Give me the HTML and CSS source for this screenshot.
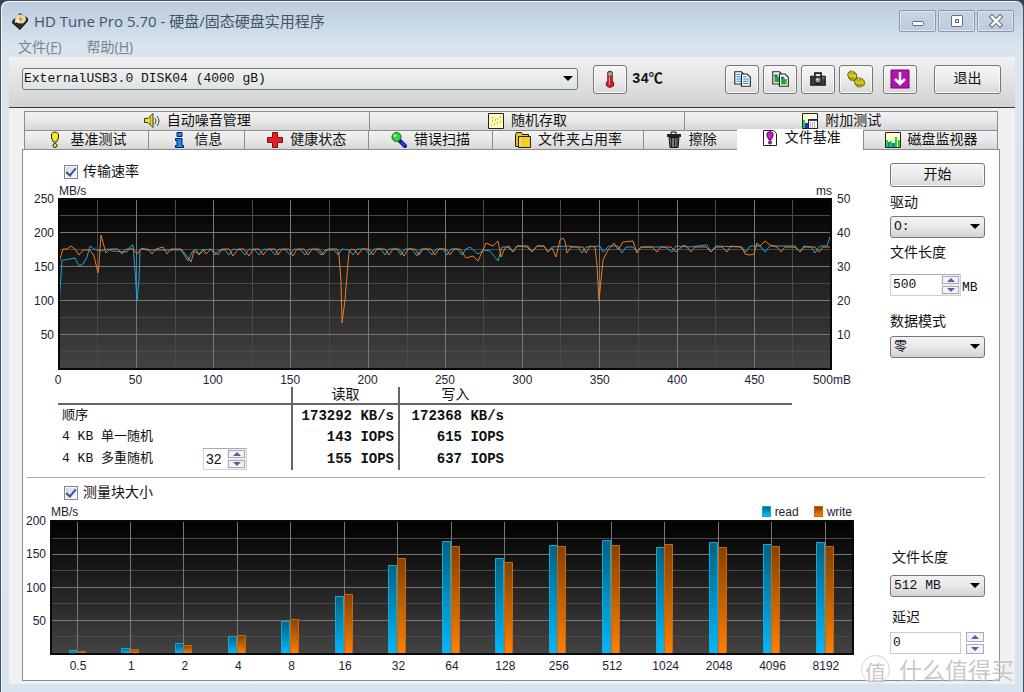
FILE: index.html
```
<!DOCTYPE html>
<html lang="zh-CN">
<head>
<meta charset="utf-8">
<title>HD Tune Pro 5.70</title>
<link rel="stylesheet" href="styles.css">
</head>
<body>
<div class="window">
  <header class="titlebar">
    <svg class="app-icon" viewBox="0 0 18 18"><path d="M1 9 9 1l8 5-8 10z" fill="#2b2622"/><path d="m1 9 8 7v2L1 11zM9 16l8-10v3L9 18z" fill="#111"/><ellipse cx="9.500" cy="7" rx="5.500" ry="4.500" fill="#f0d3a4"/><circle cx="9.500" cy="7" r="1.500" fill="#b98a50"/><path d="m4 10 4-2" stroke="#fff" stroke-width="1.500"/></svg>
    <h1>HD Tune Pro 5.70 - 硬盘/固态硬盘实用程序</h1>
    <div class="caption">
      <button aria-label="最小化"><svg viewBox="0 0 14 14"><rect x="1.500" y="7.500" width="11" height="4" rx="1" fill="#fff" stroke="#626a75"/></svg></button>
      <button aria-label="最大化"><svg viewBox="0 0 14 14"><rect x="1.500" y="1.500" width="11" height="11" rx="1" fill="#fff" stroke="#626a75"/><rect x="5.500" y="5.500" width="3" height="3" fill="#dbe5ef" stroke="#626a75"/></svg></button>
      <button aria-label="关闭"><svg viewBox="0 0 14 14"><path d="m3 3 8 8m0-8-8 8" stroke="#626a75" stroke-width="4.500" stroke-linecap="square"/><path d="m3 3 8 8m0-8-8 8" stroke="#fff" stroke-width="2.500" stroke-linecap="square"/></svg></button>
    </div>
  </header>
  <nav class="menubar"><button>文件(<u>F</u>)</button><button>帮助(<u>H</u>)</button></nav>

  <main class="client">
    <div class="toolbar">
      <label class="combo drive"><select aria-label="磁盘"><option>ExternalUSB3.0 DISK04 (4000 gB)</option></select></label>
      <button class="tool" aria-label="温度"><svg viewBox="0 0 18 18"><path d="M7 3q2-2 4 0v8q2 2 1 4-3 3-6 0-1-2 1-4z" fill="#e11a22" stroke="#7a2020"/><path d="M7.500 3h3v3h-3z" fill="#45e0c0"/><path d="M8.500 7v7" stroke="#ff9a9a"/></svg></button>
      <output class="temp">34℃</output>
      <div class="tools">
        <button class="tool" aria-label="复制文本"><svg viewBox="0 0 18 18"><path d="M2.500 2.500h6l2 2v9h-8z" fill="#fff" stroke="#222"/><path d="M8.500 4.500h5l3 3v8h-8z" fill="#fff" stroke="#222"/><path d="M4 5h3M4 7h4M4 9h4M4 11h4M10 7h3M10 9h5M10 11h5M10 13h5" stroke="#1683d8"/></svg></button>
        <button class="tool" aria-label="复制图像"><svg viewBox="0 0 18 18"><path d="M2.500 2.500h6l2 2v9h-8z" fill="#fff" stroke="#222"/><path d="M4 5h3v2h1v5H4z" fill="#25a52a"/><path d="M8.500 4.500h5l3 3v8h-8z" fill="#fff" stroke="#222"/><path d="M10 7h3v2h2v5h-5z" fill="#25a52a"/><path d="M10 7h2v2h-2zM4 5h2v2H4z" fill="#2368c9"/></svg></button>
        <button class="tool" aria-label="截图"><svg viewBox="0 0 18 18"><path d="M2.500 6.500H6v-3h6v3h3.500v8h-13z" fill="#3a423e" stroke="#111"/><path d="M7 4.500h4v2H7z" fill="#dce7df"/><circle cx="9" cy="10" r="3" fill="#7b8c82" stroke="#111"/><circle cx="8.500" cy="9.500" r="1" fill="#e6f1ea"/><path d="M13 8h2" stroke="#35e050"/></svg></button>
        <button class="tool" aria-label="选项"><svg viewBox="0 0 18 18"><g fill="#d8ce13" stroke="#716c12"><path d="m1.500 5 1-2 2-1 3 1 2 2v3l-2 2-3 0-2-2z"/><path d="m7.500 11 1-2 3-1 3 1 2 2v3l-3 2-3 0-2-2z"/></g><path d="M5.500 1.500v4M11.500 7.500v4" stroke="#716c12" stroke-width="2.500"/><path d="M5.500 1.500v4M11.500 7.500v4" stroke="#f5efaa"/><path d="M3 7.500q2 2 4 0m2 6q3 2 5 0" fill="none" stroke="#8a8418"/></svg></button>
        <button class="tool save" aria-label="保存"><svg viewBox="0 0 20 20"><path d="M1 1h18v18H1z" fill="#b313b0" stroke="#760477"/><path d="M10 3v12m-5-5 5 5 5-5" fill="none" stroke="#fff" stroke-width="2.500"/></svg></button>
        <button class="exit">退出</button>
      </div>
    </div>

    <div class="tabs">
      <div class="tabrow upper">
        <button><svg viewBox="0 0 18 18"><path d="M1.500 6.500H5l5-5v14l-5-5H1.500z" fill="#f3e81c" stroke="#333"/><path d="M7.500 4v9" stroke="#8d8612"/><path d="M12 6q2 3 0 6m2-8q4 5 0 10" fill="none" stroke="#444"/></svg>自动噪音管理</button>
        <button><svg viewBox="0 0 18 18"><path d="M1.500 1.500h15v15h-15z" fill="#ffffb4" stroke="#222"/><path d="M4 13h1m0-4h1m1 3h1m0-4h1m1 3h1m-1-4h1m2-2h1m-1 5h1m-9-4h1" stroke="#886a32"/></svg>随机存取</button>
        <button><svg viewBox="0 0 18 18"><path d="M1.500 1.500h15v15h-15z" fill="#fffbd7" stroke="#222"/><path d="M2 16V8h2v8z" fill="#16dd1c"/><path d="M4 16v-5h3v5z" fill="#2229ee"/><path d="M7.500 7.500h9v9h-9z" fill="#fff" stroke="#223"/><path d="M8 8.500h8" stroke="#2c45bf"/><path d="M9 11h6M9 13h6M9 15h6" stroke="#a55" stroke-dasharray="1 1"/></svg>附加测试</button>
      </div>
      <div class="tabrow lower">
        <button><svg viewBox="0 0 18 18"><path d="M5.500 3q3.500-4 7 0v4l-2 4h-3l-2-4z" fill="#f4ec19" stroke="#222"/><circle cx="9" cy="14.500" r="2" fill="#f4ec19" stroke="#222"/></svg>基准测试</button>
        <button><svg viewBox="0 0 18 18"><path d="M7 1.500h5v4H7zM5.500 7.500H12v7h1.500v2h-8v-2H7v-5H5.500z" fill="#168cf5" stroke="#08175c"/></svg>信息</button>
        <button><svg viewBox="0 0 18 18"><path d="M6.500 1.500h5v5h5v5h-5v5h-5v-5h-5v-5h5z" fill="#e91d1d" stroke="#7d1010"/></svg>健康状态</button>
        <button><svg viewBox="0 0 18 18"><path d="m10 10 5 5" stroke="#10107c" stroke-width="4" stroke-linecap="round"/><path d="m11 11 4 4" stroke="#2b45ff" stroke-width="2"/><circle cx="6.500" cy="6" r="4.500" fill="#2ed83a" stroke="#1b5a22"/><circle cx="5" cy="4.500" r="1.500" fill="#a8f6a6"/></svg>错误扫描</button>
        <button><svg viewBox="0 0 18 18"><path d="M1.500 3.500l1-2h5l1 2h6v12h-13z" fill="#e4c419" stroke="#222"/><path d="M4.500 5.500h12v11h-12z" fill="#f3cf29" stroke="#222"/><path d="M6 7v8" stroke="#fff49c"/></svg>文件夹占用率</button>
        <button><svg viewBox="0 0 18 18"><path d="M6 3V1h5v2" fill="none" stroke="#111"/><path d="M2 3h14v3H2z" fill="#222"/><path d="M4 6.500h10l-1 10H5z" fill="#777" stroke="#111"/><path d="M6.500 7v9m3-9v9m2.500-9v9" stroke="#222"/></svg>擦除</button>
        <button class="active"><svg viewBox="0 0 18 18"><path d="M2.500 1.500h10l3 3v12h-13z" fill="#fff" stroke="#222"/><path d="M6 4q3-3 6 0v3l-2 4H8L6 7z" fill="#cf16ca" stroke="#49104a"/><circle cx="9" cy="13.500" r="1.500" fill="#cf16ca" stroke="#49104a"/></svg>文件基准</button>
        <button><svg viewBox="0 0 18 18"><path d="M1.500 1.500h15v15h-15z" fill="#ffffd1" stroke="#222"/><path d="M2 16V9h2v7zm4 0v-6h2v6zm5 0V6h2v10zm3 0V9h2v7z" fill="#16dd1c"/><path d="M4 16v-5h2v5zm4 0v-4h3v4z" fill="#187bd2"/></svg>磁盘监视器</button>
      </div>
    </div>

    <div class="panel">
      <section class="section transfer">
        <div class="content">
          <label class="check"><input type="checkbox" checked>传输速率</label>
          <div class="chart line-chart">
            <span class="unit">MB/s</span><span class="unit right">ms</span>
            <div class="yaxis"><span>250</span><span>200</span><span>150</span><span>100</span><span>50</span><span></span></div>
            <svg class="plot" viewBox="58 198 774 172" preserveAspectRatio="none" role="img" aria-label="传输速率曲线">
              <defs><linearGradient id="bg" x2="0" y2="1"><stop stop-color="#000"/><stop offset="1" stop-color="#444"/></linearGradient></defs>
              <path d="M58 198h774v172H58z" fill="url(#bg)"/>
              <path class="grid minor" d="M58 215.500h774M58 249.500h774M58 283.500h774M58 317.500h774M58 351.500h774M97.500 198v172M175.500 198v172M252.500 198v172M329.500 198v172M407.500 198v172M483.500 198v172M560.500 198v172M638.500 198v172M715.500 198v172M792.500 198v172"/>
              <path class="grid" d="M58 199.500h774M58 232.500h774M58 266.500h774M58 300.500h774M58 334.500h774M136.500 198v172M213.500 198v172M290.500 198v172M368.500 198v172M445.500 198v172M522.500 198v172M599.500 198v172M677.500 198v172M754.500 198v172"/>
              <polyline class="trace read" points="59,310 60,290 62,260 65,260 75,258 79,266 83,264 87,257 90,246 94,249 100,251 108,249 112,251 127,252 130,247 133,245 135,270 137,301 139,280 140,250 142,248 146,250 160,250 181,250 188,261 192,252 196,249 199,255 204,250 211,249 215,255 219,250 225,250 229,255 233,249 241,250 245,255 249,249 255,250 259,255 264,249 271,250 275,255 279,249 286,250 290,255 294,249 301,250 305,255 309,249 317,250 321,255 325,250 334,250 338,255 342,249 349,250 353,255 357,249 365,249 370,255 374,249 381,249 385,255 389,249 397,249 401,255 405,249 412,249 417,256 421,249 427,249 432,255 436,249 443,249 447,255 451,249 457,249 462,255 466,249 470,247 478,254 484,250 490,251 498,261 502,247 508,247 513,252 517,246 527,247 532,252 537,246 544,246 548,252 552,247 567,246 578,247 582,253 586,247 600,246 603,252 609,246 618,246 622,253 626,247 633,247 637,252 641,247 665,247 672,252 676,246 689,247 707,245 711,252 716,246 740,247 746,252 750,246 760,246 765,252 770,246 795,246 800,252 804,246 811,247 815,253 820,246 827,246 831,234"/>
              <polyline class="trace write" points="59,266 60,259 63,249 67,249 71,246 75,249 79,255 83,250 90,250 94,256 98,273 99,263 101,235 104,246 106,253 110,249 118,249 122,254 126,249 133,249 137,254 141,249 148,249 152,254 156,249 163,247 167,254 171,249 181,249 186,255 191,262 194,251 199,254 203,249 206,254 211,249 218,255 222,249 229,249 233,256 238,249 244,249 249,256 253,249 259,249 263,255 268,249 275,249 278,255 282,249 289,249 293,256 297,249 304,249 308,255 312,249 319,249 323,255 328,249 337,249 339,255 341,282 342,323 345,300 347,275 349,252 351,249 355,250 358,255 362,249 369,249 373,255 377,249 385,249 389,255 393,249 399,249 404,256 408,249 415,249 419,255 423,249 431,249 435,255 439,249 446,249 450,255 454,249 460,249 466,258 473,256 478,261 483,250 486,243 493,246 498,241 501,257 505,248 509,246 513,252 517,246 528,246 532,252 537,246 544,246 548,252 552,248 556,257 560,240 563,238 565,241 567,253 571,247 583,247 586,253 590,246 595,247 597,265 599,301 601,280 603,260 608,250 614,243 618,250 623,242 633,241 637,253 641,247 652,247 657,252 661,247 671,247 676,252 684,245 687,247 691,252 695,247 706,247 711,252 716,247 722,247 727,252 731,246 742,247 745,254 750,255 754,254 757,243 760,246 765,241 770,245 777,247 781,252 785,247 795,247 800,252 804,247 815,247 819,252 823,247 831,247"/>
              <path class="frame" d="M59 199h772v170H59z"/>
            </svg>
            <div class="yaxis right"><span>50</span><span>40</span><span>30</span><span>20</span><span>10</span><span></span></div>
            <div class="xaxis"><span>0</span><span>50</span><span>100</span><span>150</span><span>200</span><span>250</span><span>300</span><span>350</span><span>400</span><span>450</span><span>500mB</span></div>
          </div>
          <table class="results">
            <thead><tr><th class="name"></th><th class="val">读取</th><th class="val">写入</th><th></th></tr></thead>
            <tbody>
              <tr><th class="name" scope="row">顺序</th><td>173292 KB/s</td><td>172368 KB/s</td><td></td></tr>
              <tr><th class="name" scope="row">4 KB 单一随机</th><td>143 IOPS</td><td>615 IOPS</td><td></td></tr>
              <tr><th class="name" scope="row"><div class="queue">4 KB 多重随机<span class="spin narrow"><input type="text" value="32" aria-label="队列深度"><span class="arrows"><button aria-label="增加"></button><button aria-label="减少"></button></span></span></div></th><td>155 IOPS</td><td>637 IOPS</td><td></td></tr>
            </tbody>
          </table>
        </div>
        <aside class="side">
          <button class="start">开始</button>
          <label for="drv">驱动</label>
          <span class="combo"><select id="drv"><option>O:</option></select></span>
          <label for="len">文件长度</label>
          <div class="length"><span class="spin"><input id="len" type="text" value="500"><span class="arrows"><button aria-label="增加"></button><button aria-label="减少"></button></span></span><span>MB</span></div>
          <label for="mode">数据模式</label>
          <span class="combo"><select id="mode"><option>零</option></select></span>
        </aside>
      </section>

      <section class="section blocks">
        <div class="content">
          <label class="check"><input type="checkbox" checked>测量块大小</label>
          <div class="chart bar-chart">
            <span class="unit">MB/s</span>
            <div class="legend"><span><i class="swatch read"></i>read</span><span><i class="swatch write"></i>write</span></div>
            <div class="yaxis"><span>200</span><span>150</span><span>100</span><span>50</span><span></span></div>
            <svg class="plot" viewBox="50 520 804 135" preserveAspectRatio="none" role="img" aria-label="块大小测试">
              <defs>
                <linearGradient id="rd" x2="0" y2="1"><stop stop-color="#006384"/><stop offset="1" stop-color="#00b9ff"/></linearGradient>
                <linearGradient id="wr" x2="0" y2="1"><stop stop-color="#854300"/><stop offset="1" stop-color="#ff8000"/></linearGradient>
              </defs>
              <path d="M50 520h804v135H50z" fill="url(#bg)"/>
              <path class="grid minor" d="M50 538.500h804M50 570.500h804M50 603.500h804M50 636.500h804"/>
              <path class="grid" d="M50 521.500h804M50 554.500h804M50 587.500h804M50 620.500h804M77.500 520v135M130.500 520v135M183.500 520v135M237.500 520v135M290.500 520v135M344.500 520v135M397.500 520v135M451.500 520v135M504.500 520v135M557.500 520v135M611.500 520v135M664.500 520v135M718.500 520v135M771.500 520v135M825.500 520v135"/>
              <g fill="url(#rd)" stroke="#17a6d5">
                <path d="M69.500 650.500h8v3h-8z"/><path d="M121.500 648.500h8v5h-8z"/><path d="M175.500 643.500h8v10h-8z"/><path d="M228.500 636.500h8v17h-8z"/><path d="M281.500 621.500h8v32h-8z"/><path d="M335.500 596.500h8v57h-8z"/><path d="M388.500 565.500h8v88h-8z"/><path d="M442.500 541.500h8v112h-8z"/><path d="M495.500 558.500h8v95h-8z"/><path d="M549.500 545.500h8v108h-8z"/><path d="M602.500 540.500h8v113h-8z"/><path d="M656.500 547.500h8v106h-8z"/><path d="M709.500 542.500h8v111h-8z"/><path d="M763.500 544.500h8v109h-8z"/><path d="M816.500 542.500h8v111h-8z"/>
              </g>
              <g fill="url(#wr)" stroke="#cf640a">
                <path d="M77.500 651.500h8v2h-8z"/><path d="M130.500 649.500h8v4h-8z"/><path d="M183.500 645.500h8v8h-8z"/><path d="M237.500 635.500h8v18h-8z"/><path d="M290.500 619.500h8v34h-8z"/><path d="M344.500 594.500h8v59h-8z"/><path d="M397.500 558.500h8v95h-8z"/><path d="M451.500 546.500h8v107h-8z"/><path d="M504.500 562.500h8v91h-8z"/><path d="M557.500 546.500h8v107h-8z"/><path d="M611.500 545.500h8v108h-8z"/><path d="M664.500 544.500h8v109h-8z"/><path d="M718.500 547.500h8v106h-8z"/><path d="M771.500 546.500h8v107h-8z"/><path d="M825.500 546.500h8v107h-8z"/>
              </g>
              <path class="frame" d="M51 521h802v133H51z"/>
            </svg>
            <div class="xaxis"><span>0.5</span><span>1</span><span>2</span><span>4</span><span>8</span><span>16</span><span>32</span><span>64</span><span>128</span><span>256</span><span>512</span><span>1024</span><span>2048</span><span>4096</span><span>8192</span></div>
          </div>
        </div>
        <aside class="side">
          <label for="len2">文件长度</label>
          <span class="combo"><select id="len2"><option>512 MB</option></select></span>
          <label for="delay">延迟</label>
          <span class="spin apart"><input id="delay" type="text" value="0"><span class="arrows"><button aria-label="增加"></button><button aria-label="减少"></button></span></span>
        </aside>
      </section>
    </div>
  </main>
  <div class="watermark"><span class="seal">值</span><span>什么值得买</span></div>
</div>
</body>
</html>
```
FILE: styles.css
```
* { box-sizing: border-box; }
body { margin: 0; background: #3c4046; color: #111; font: 14px/20px "Liberation Mono", "Noto Sans CJK SC", monospace; }
button, select, input { font: inherit; color: inherit; margin: 0; }
button { padding: 0; }

.window { position: relative; display: flex; flex-direction: column; min-height: 100vh; padding: 0 8px 8px; border: 1px solid #4a5058; border-radius: 8px 8px 0 0; background: linear-gradient(#bccbdc 0, #c9d8e8 24px, #dae4ef 46px, #d8e3f1 100%); box-shadow: inset 1px 1px #f0f6fc; }

.titlebar { display: flex; align-items: center; gap: 5px; height: 40px; padding-left: 2px; }
.app-icon { width: 18px; height: 18px; }
.titlebar h1 { flex: 1; margin: 0; font: 15px/20px "Open Sans", "Noto Sans CJK SC", sans-serif; color: #45525f; }
.caption { display: flex; gap: 2px; align-self: flex-start; padding: 9px 1px 0 0; }
.caption button { display: grid; place-items: center; width: 37px; height: 22px; border: 1px solid #8797ab; border-radius: 2px; background: linear-gradient(#c6d4e3, #bccbdc); box-shadow: inset 0 0 0 1px #dce7f2; }
.caption svg { width: 14px; height: 14px; }

.menubar { display: flex; gap: 25px; height: 16px; padding-left: 9px; }
.menubar button { height: 12px; border: 0; background: none; font: 14px/12px "Open Sans", "Noto Sans CJK SC", sans-serif; color: #7b8289; }

.client { flex: 1; background: #f0f0f0; padding-bottom: 3px; }
.toolbar { display: flex; align-items: center; height: 51px; padding: 0 14px 6px 13px; border-bottom: 1px solid #333; background: linear-gradient(#f1f1f1, #d2d2d2); }
.combo { position: relative; display: block; height: 22px; }
.combo select { appearance: none; display: block; width: 100%; height: 100%; padding: 0 20px 0 3px; border: 1px solid #777; border-radius: 3px; background: linear-gradient(#f2f2f2, #e8e8e8 50%, #d2d2d2); font-size: 13px; line-height: 20px; }
.combo::after { content: ""; position: absolute; right: 5px; top: 8px; border: 5px solid transparent; border-top-color: #000; border-bottom: 0; }
.drive { width: 556px; }
.drive select { padding-left: 1px; background: linear-gradient(#f0f2f2, #dde3e3); border-color: #707a80; }
.tool, .exit, .start { border: 1px solid #777; border-radius: 3px; background: linear-gradient(#f5f5f5, #ececec 50%, #d8d8d8); box-shadow: inset 0 0 0 1px #f8f8f8; }
.tool { display: grid; place-items: center; width: 34px; height: 29px; }
.tool svg { width: 20px; height: 20px; }
.drive + .tool { margin-left: 15px; }
.temp { margin-left: 5px; font-weight: bold; }
.tools { display: flex; gap: 4px; margin-left: auto; }
.tools .save { margin-left: 6px; }
.exit { width: 67px; height: 29px; margin-left: 13px; }

.tabs { padding: 3px 17px 0 15px; }
.tabrow { display: grid; border: solid #8c8c8c; border-width: 1px 1px 0; }
.upper { grid-template-columns: 344fr 316fr 313fr; }
.lower { grid-template-columns: 123fr 96fr 124fr 124fr 152fr 94fr 126fr 134fr; }
.tabrow button { display: flex; align-items: center; justify-content: center; gap: 6px; height: 18px; border: 0; border-left: 1px solid #8c8c8c; background: linear-gradient(#f2f2f2, #e8e8e8 50%, #d6d6d6); line-height: 18px; white-space: nowrap; }
.tabrow button:first-child { border-left: 0; }
.tabrow svg { width: 18px; height: 18px; flex: none; }
.tabrow .active { position: relative; height: 22px; margin: -2px 0 -2px; padding-bottom: 4px; background: #fff; border-left-color: #fff; }

.panel { margin: 0 15px 0 13px; border: 1px solid #8c8c8c; background: #fff; }
.section { display: flex; }
.section .content { flex: 1; min-width: 0; }
.side { display: flex; flex-direction: column; width: 95px; margin-right: 14px; }
.transfer { margin: 0 14px 0 4px; height: 328px; border-bottom: 1px solid #aaa; }
.transfer .side { margin-right: 0; padding-top: 13px; }
.side label { line-height: 20px; }

.check { display: flex; align-items: center; gap: 5px; width: max-content; height: 20px; }
.check input { appearance: none; width: 14px; height: 14px; border: 1px solid #83888c; background: linear-gradient(135deg, #c9d4df, #fff); box-shadow: inset 0 0 0 1px #f4f4f4; display: grid; place-items: center; }
.check input:checked::before { content: ""; width: 4px; height: 8px; margin-bottom: 2px; border: solid #3c4f93; border-width: 0 2px 2px 0; transform: rotate(40deg); }
.transfer .check { margin: 12px 0 0 37px; }
.blocks .check { margin: 5px 0 0 41px; }

.chart { display: grid; font: 12px/14px "Liberation Sans", Arial, sans-serif; color: #223; }
.line-chart { grid-template: 16px 172px 16px / 31px 1fr 58px; }
.bar-chart { grid-template: 17px 135px 25px / 27px 1fr 36px; }
.unit { grid-column: 2; grid-row: 1; padding: 2px 0 0 1px; }
.unit.right { text-align: right; }
.plot { grid-column: 2; grid-row: 2; display: block; width: 100%; height: 100%; }
.grid { fill: none; stroke: #777; }
.grid.minor { stroke: #4a4a4a; }
.frame { fill: none; stroke: #080808; stroke-width: 2; }
.trace { fill: none; stroke-width: 1; }
.trace.read { stroke: #1aa7dc; }
.trace.write { stroke: #ef7a23; }
.yaxis { grid-column: 1; grid-row: 2; display: flex; flex-direction: column; justify-content: space-between; align-items: flex-end; padding: 1px 4px 1px 0; }
.yaxis span { height: 0; line-height: 0; }
.yaxis.right { grid-column: 3; align-items: flex-start; padding-left: 5px; }
.xaxis { grid-column: 2; grid-row: 3; display: flex; justify-content: space-between; padding-top: 3px; }
.xaxis span { display: flex; justify-content: center; width: 0; }
.bar-chart .xaxis { padding: 4px 28px 0; }
.legend { grid-column: 2; grid-row: 1; display: flex; justify-content: flex-end; gap: 15px; padding: 0 2px 0 0; }
.legend span { display: flex; align-items: center; gap: 4px; }
.swatch { width: 9px; height: 11px; border: 1px solid; }
.swatch.read { background: linear-gradient(#006d92, #00b9ff); border-color: #17a6d5; }
.swatch.write { background: linear-gradient(#854300, #ff8000); border-color: #cf640a; }

.results { width: 734px; margin: 1px 0 0 31px; border-collapse: collapse; table-layout: fixed; }
.results th, .results td { height: 22px; padding: 0; line-height: 20px; white-space: nowrap; }
.results th { font-weight: normal; }
.results thead th { height: 17px; line-height: 15px; border-bottom: 2px solid #666; }
.results .name { width: 234px; padding-left: 4px; font-size: 13px; text-align: left; }
.results .val { width: 107px; }
.results .name, .results .name + * { border-right: 2px solid #666; }
.results td { padding-right: 4px; font-weight: bold; text-align: right; }
.results .val + .val { width: 112px; }
.results td + td { padding-right: 7px; }
.queue { display: flex; align-items: center; justify-content: space-between; padding-right: 44px; }

.spin { display: flex; width: 71px; height: 22px; border: 1px solid #d0d0d0; border-top-color: #aaa; background: #fff; }
.spin input { flex: 1; min-width: 0; padding: 0 2px; border: 0; background: none; font-size: 13px; }
.arrows { display: flex; flex-direction: column; gap: 2px; width: 19px; padding: 1px; background: #eee; }
.arrows button { flex: 1; display: grid; place-items: center; border: 1px solid #aab; background: #f3f3f5; }
.arrows button::before { content: ""; border: 4px solid transparent; border-top: 0; border-bottom-color: #5264a0; }
.arrows button + button::before { border: 4px solid transparent; border-bottom: 0; border-top-color: #5264a0; }
.narrow { width: 44px; font-family: "Liberation Sans", Arial, sans-serif; }
.narrow input { font-size: 14px; }
.apart { width: 94px; border: 0; gap: 5px; }
.apart input { border: 1px solid #ccc; }
.apart .arrows { padding: 0; width: 18px; background: none; }

.start { width: 95px; height: 24px; }
.start + label { margin: 6px 0 3px; }
.transfer .combo + label { margin: 5px 0 11px; }
.length { display: flex; align-items: flex-end; gap: 1px; font-size: 13px; line-height: 16px; margin-bottom: 16px; }
.length + label { margin-bottom: 4px; }
.blocks .side { padding-top: 70px; }
.blocks .side label { margin-left: 2px; }
.blocks .combo { margin: 7px 0 11px; }
.blocks .spin { margin-top: 4px; }

.watermark { position: absolute; right: 9px; bottom: 8px; display: flex; align-items: center; gap: 9px; font: 23px/30px "Noto Sans CJK SC", sans-serif; color: #bbb; opacity: .8; text-shadow: 0 0 2px #fff; pointer-events: none; }
.seal { display: grid; place-items: center; width: 29px; height: 29px; border: 1px solid #ccc; border-radius: 50%; font-size: 21px; background: #fff; }
```
